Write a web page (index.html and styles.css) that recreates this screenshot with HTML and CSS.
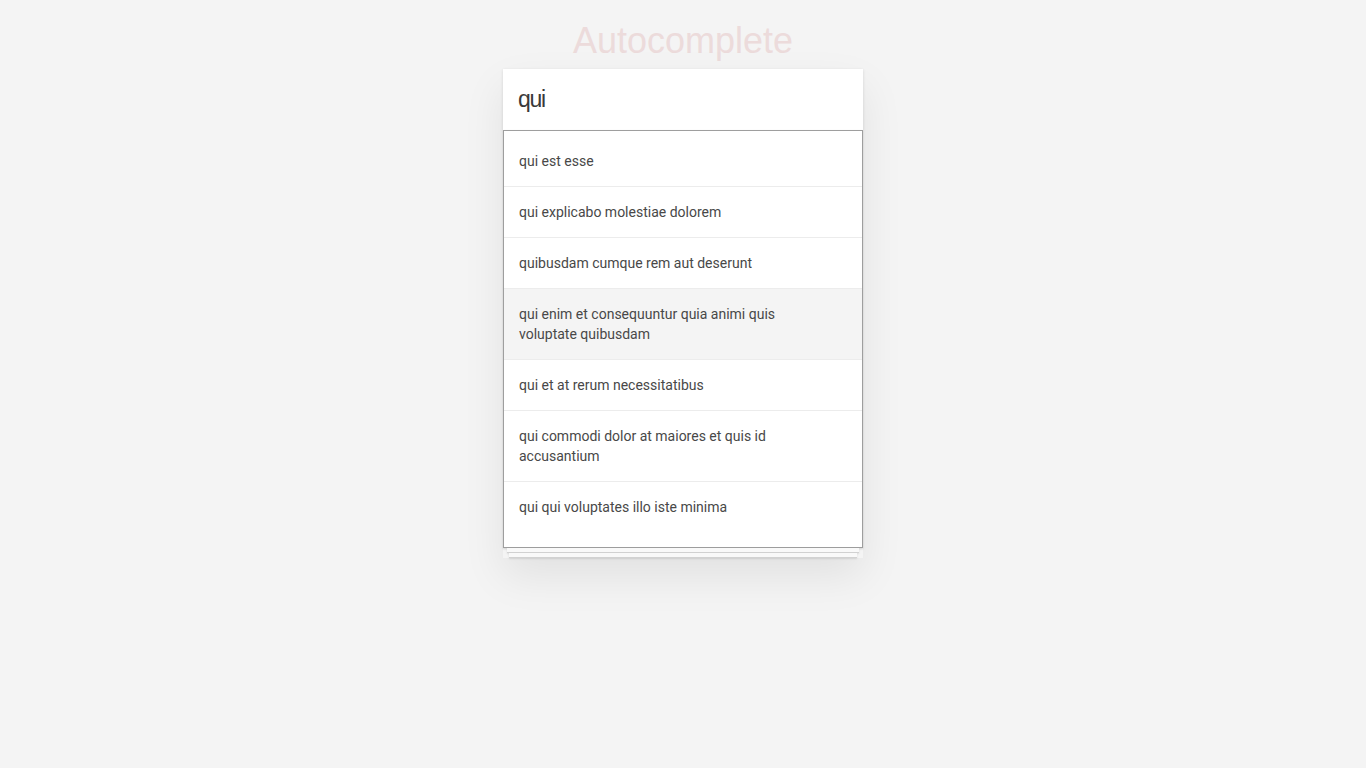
FILE: index.html
```html
<!DOCTYPE html>
<html lang="en">
<head>
<meta charset="utf-8">
<title>Autocomplete</title>
<link rel="stylesheet" href="styles.css">
</head>
<body>
<main class="page">
  <h1 class="title">Autocomplete</h1>
  <div class="widget">
    <input class="search" type="text" value="qui">
    <ul class="results">
      <li class="result">qui est esse</li>
      <li class="result">qui explicabo molestiae dolorem</li>
      <li class="result">quibusdam cumque rem aut deserunt</li>
      <li class="result is-active">qui enim et consequuntur quia animi quis voluptate quibusdam</li>
      <li class="result">qui et at rerum necessitatibus</li>
      <li class="result">qui commodi dolor at maiores et quis id accusantium</li>
      <li class="result">qui qui voluptates illo iste minima</li>
    </ul>
    <div class="sheet sheet-one"></div>
    <div class="sheet sheet-two"></div>
  </div>
</main>
</body>
</html>
```

FILE: styles.css
```css
html, body {
  margin: 0;
  padding: 0;
  background: #f4f4f4;
}

.page {
  box-sizing: border-box;
  min-height: 100vh;
  display: flex;
  flex-direction: column;
  align-items: center;
  padding-top: 20px;
  font-family: "Liberation Sans", Arial, sans-serif;
}

.title {
  margin: 0 0 8px;
  font-size: 36px;
  line-height: 41px;
  font-weight: 400;
  color: #ecdbdb;
}

.widget {
  width: 360px;
  display: flex;
  flex-direction: column;
  box-shadow: 0 18px 40px rgba(0, 0, 0, 0.08);
}

.search {
  box-sizing: border-box;
  width: 360px;
  height: 61px;
  margin: 0;
  padding: 0 15px;
  border: none;
  outline: none;
  background: #fff;
  font-family: "Liberation Sans", Arial, sans-serif;
  font-size: 23px;
  letter-spacing: -1.3px;
  color: #3a3a3a;
  box-shadow: 0 1px 3px rgba(0, 0, 0, 0.12);
}

.results {
  list-style: none;
  margin: 0;
  padding: 5px 0 15px;
  background: #fff;
  border: 1px solid #9e9e9e;
  box-shadow: 0 1px 2px rgba(0, 0, 0, 0.15);
  font-family: Roboto, "Open Sans", sans-serif;
  font-size: 14px;
  line-height: 20px;
  color: #484848;
}

.result {
  padding: 15px 30px 15px 15px;
  border-bottom: 1px solid #ececec;
}

.result:last-child {
  border-bottom: none;
}

.result.is-active {
  background: #f4f4f4;
}

.sheet {
  height: 4px;
  background: #f9f9f9;
  border-bottom: 1px solid #d2d2d2;
  box-shadow: 0 1px 2px rgba(0, 0, 0, 0.1);
}

.sheet-one {
  margin: 0 4px;
}

.sheet-two {
  margin: 0 6px;
}
```
